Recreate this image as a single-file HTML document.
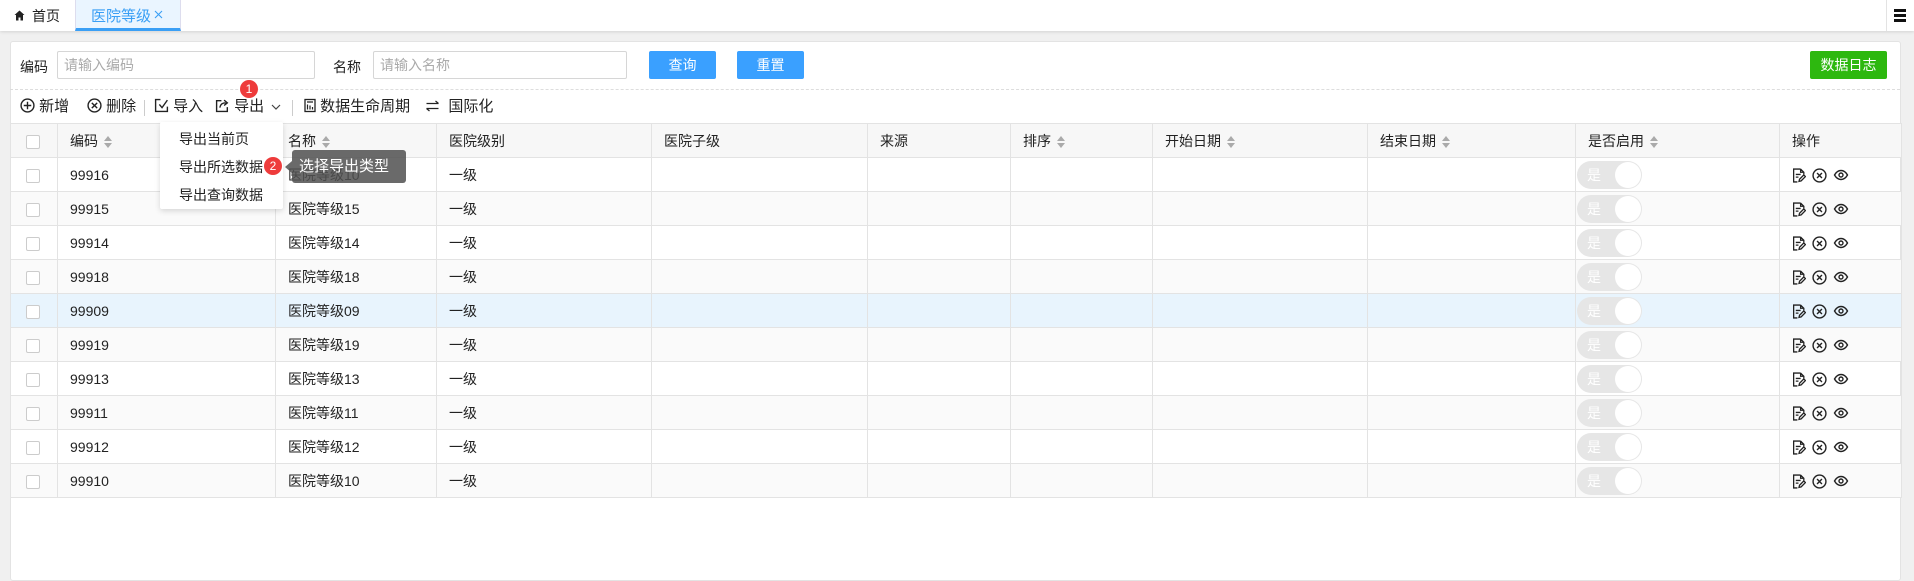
<!DOCTYPE html>
<html><head><meta charset="utf-8">
<style>
*{box-sizing:border-box;margin:0;padding:0}
body{width:1914px;height:567px;overflow:hidden;background:#f0f0f0;font-family:"Liberation Sans","Noto Sans CJK SC",sans-serif;font-size:14px;color:#222;position:relative}
.abs{position:absolute}
.tabbar{left:0;top:0;width:1914px;height:31px;background:#fff;box-shadow:0 1px 3px rgba(0,0,0,.12)}
.card{left:10px;top:41px;width:1891px;height:540px;background:#fff;border:1px solid #e3e3e3;border-radius:3px}
.inp{height:28px;border:1px solid #d6d6d6;border-radius:2px;color:#aaa;padding-left:6px;line-height:26px;font-size:14px}
.btn{height:28px;color:#fff;text-align:center;line-height:28px;border-radius:2px;font-size:14px}
.tb{top:97px;height:20px;line-height:20px;font-size:15px;color:#222}
table{border-collapse:collapse;table-layout:fixed;position:absolute;left:10px;top:123px;width:1891px}
td,th{border:1px solid #e3e3e3;height:34px;font-weight:normal;text-align:left;padding-left:12px;font-size:14px;white-space:nowrap;overflow:hidden}
th{background:#f7f7f7}
tr.g td{background:#fafafa}
tr.h td{background:#e8f4fd}
.cb{display:inline-block;width:14px;height:14px;border:1px solid #ccc;border-radius:2px;background:#fff;vertical-align:middle}
.sort{display:inline-block;width:8px;height:12px;vertical-align:middle;margin-left:6px;position:relative}
.sort:before{content:"";position:absolute;left:0;top:0;border:4px solid transparent;border-bottom:5px solid #aaa;border-top:0}
.sort:after{content:"";position:absolute;left:0;top:7px;border:4px solid transparent;border-top:5px solid #aaa;border-bottom:0}
.sw{display:inline-block;width:65px;height:28px;border-radius:14px;background:#e6e6e6;position:relative;vertical-align:middle;margin-left:-11px}
.sw span{position:absolute;left:10px;top:5px;color:#fff;font-size:14px;line-height:18px}
.sw i{position:absolute;right:1px;top:1px;width:26px;height:26px;border-radius:50%;background:#fff}
.ops svg{vertical-align:middle;margin-right:6px}
</style></head><body>
<div class="abs tabbar">
  <svg class="abs" style="left:14px;top:10px" width="11" height="11" viewBox="0 0 11 11"><path d="M5.5 0.5L0.5 5H2V10.5H4.5V7.5H6.5V10.5H9V5H10.5Z" fill="#222"/></svg>
  <div class="abs" style="left:32px;top:6px;font-size:14px">首页</div>
  <div class="abs" style="left:75px;top:0;width:106px;height:31px;background:#eaf5ff;border-left:1px solid #dde;border-right:1px solid #dde;border-bottom:3px solid #3a9ff5"></div>
  <div class="abs" style="left:91px;top:5px;font-size:15px;color:#3a9ff5">医院等级</div>
  <svg class="abs" style="left:154px;top:10px" width="9" height="9" viewBox="0 0 9 9"><path d="M1 1L8 8M8 1L1 8" stroke="#3a9ff5" stroke-width="1.1"/></svg>
  <div class="abs" style="left:1886px;top:0;width:1px;height:31px;background:#e3e3e3"></div>
  <div class="abs" style="left:1894px;top:9px;width:12px;height:2.5px;background:#111;box-shadow:0 5px 0 #111,0 10px 0 #111"></div>
</div>
<div class="abs card"></div>
<div class="abs" style="left:20px;top:57px">编码</div>
<div class="abs inp" style="left:57px;top:51px;width:258px">请输入编码</div>
<div class="abs" style="left:333px;top:57px">名称</div>
<div class="abs inp" style="left:373px;top:51px;width:254px">请输入名称</div>
<div class="abs btn" style="left:649px;top:51px;width:67px;background:#3aa0ff">查询</div>
<div class="abs btn" style="left:737px;top:51px;width:67px;background:#3aa0ff">重置</div>
<div class="abs btn" style="left:1810px;top:51px;width:77px;background:#2db80f">数据日志</div>
<div class="abs" style="left:10px;top:89px;width:1890px;border-top:1px dashed #ddd"></div>

<div class="abs tb" style="left:20px"><svg width="15" height="15" viewBox="0 0 14 14" style="vertical-align:-2px"><circle cx="7" cy="7" r="6" fill="none" stroke="#222" stroke-width="1.3"/><path d="M7 3.5V10.5M3.5 7H10.5" stroke="#222" stroke-width="1.3"/></svg> 新增</div>
<div class="abs tb" style="left:87px"><svg width="15" height="15" viewBox="0 0 14 14" style="vertical-align:-2px"><circle cx="7" cy="7" r="6" fill="none" stroke="#222" stroke-width="1.3"/><path d="M4.5 4.5L9.5 9.5M9.5 4.5L4.5 9.5" stroke="#222" stroke-width="1.3"/></svg> 删除</div>
<div class="abs" style="left:144px;top:100px;width:1px;height:16px;background:#ccc"></div>
<div class="abs tb" style="left:154px"><svg width="15" height="15" viewBox="0 0 14 14" style="vertical-align:-2px"><path d="M6 1.5H1.5V12.5H12.5V8M5 6L7.5 9L12.5 2" fill="none" stroke="#222" stroke-width="1.3"/></svg> 导入</div>
<div class="abs tb" style="left:215px"><svg width="15" height="15" viewBox="0 0 14 14" style="vertical-align:-2px"><path d="M6 2.5H1.5V12.5H11.5V8.5M4.5 9C5 6 7 4.5 10 4.5M8.5 2L11.5 4.5L8.5 7" fill="none" stroke="#222" stroke-width="1.3"/></svg> 导出 <svg width="10" height="8" viewBox="0 0 10 8" style="margin-left:3px"><path d="M1 2L5 6L9 2" fill="none" stroke="#444" stroke-width="1.2"/></svg></div>
<div class="abs" style="left:292px;top:100px;width:1px;height:16px;background:#ccc"></div>
<div class="abs tb" style="left:304px"><svg width="12" height="15" viewBox="0 0 12 14" style="vertical-align:-2px"><rect x="1" y="1" width="10" height="12" fill="none" stroke="#222" stroke-width="1.3"/><path d="M3 3.5H9M3.5 6V11M6 7V11M8.5 8.5V11" stroke="#222" stroke-width="1.2"/></svg> 数据生命周期</div>
<div class="abs tb" style="left:425px"><svg width="15" height="14" viewBox="0 0 14 14" style="vertical-align:-2px"><path d="M1 4.5H13M10 2L13 4.5M13 9.5H1M4 12L1 9.5" fill="none" stroke="#222" stroke-width="1.2"/></svg>&nbsp; 国际化</div>

<table>
<colgroup><col style="width:47px"><col style="width:218px"><col style="width:161px"><col style="width:215px"><col style="width:216px"><col style="width:143px"><col style="width:142px"><col style="width:215px"><col style="width:208px"><col style="width:204px"><col style="width:122px"></colgroup>
<tr><th style="padding-left:15px"><span class="cb"></span></th><th>编码<span class="sort"></span></th><th>名称<span class="sort"></span></th><th>医院级别</th><th>医院子级</th><th>来源</th><th>排序<span class="sort"></span></th><th>开始日期<span class="sort"></span></th><th>结束日期<span class="sort"></span></th><th>是否启用<span class="sort"></span></th><th>操作</th></tr>
</table>
<table id="t" style="top:157px"></table>
<script>
var ids=[["99916","10"],["99915","15"],["99914","14"],["99918","18"],["99909","09"],["99919","19"],["99913","13"],["99911","11"],["99912","12"],["99910","10"]];
var ops='<svg width="14" height="15" viewBox="0 0 13 14"><path d="M8 1H1.5V13H5M8 1L11 4V6M8 1V4H11M3.5 6H8M3.5 8.5H6M6.5 12.5L7 10.5L11 6.5L12.5 8L8.5 12Z" fill="none" stroke="#222" stroke-width="1.2"/></svg><svg width="15" height="15" viewBox="0 0 14 14"><circle cx="7" cy="7" r="6" fill="none" stroke="#222" stroke-width="1.3"/><path d="M4.7 4.7L9.3 9.3M9.3 4.7L4.7 9.3" stroke="#222" stroke-width="1.3"/></svg><svg width="16" height="12" viewBox="0 0 15 12"><path d="M1 6C3 2.5 5 1.5 7.5 1.5S12 2.5 14 6C12 9.5 10 10.5 7.5 10.5S3 9.5 1 6Z" fill="none" stroke="#222" stroke-width="1.4"/><circle cx="7.5" cy="6" r="2" fill="none" stroke="#222" stroke-width="1.4"/></svg>';
var h='<colgroup><col style="width:47px"><col style="width:218px"><col style="width:161px"><col style="width:215px"><col style="width:216px"><col style="width:143px"><col style="width:142px"><col style="width:215px"><col style="width:208px"><col style="width:204px"><col style="width:122px"></colgroup>';
ids.forEach(function(r,i){var c=i==4?'h':(i%2?'g':'');h+='<tr class="'+c+'"><td style="padding-left:15px"><span class="cb"></span></td><td>'+r[0]+'</td><td>医院等级'+r[1]+'</td><td>一级</td><td></td><td></td><td></td><td></td><td></td><td><span class="sw"><span>是</span><i></i></span></td><td class="ops">'+ops+'</td></tr>';});
document.getElementById('t').innerHTML=h;
</script>

<div class="abs" style="left:160px;top:122px;width:123px;height:87px;background:#fff;box-shadow:0 2px 6px rgba(0,0,0,.15);border-radius:2px"></div>
<div class="abs" style="left:179px;top:129px">导出当前页</div>
<div class="abs" style="left:179px;top:157px">导出所选数据</div>
<div class="abs" style="left:179px;top:185px">导出查询数据</div>
<div class="abs" style="left:292px;top:150px;width:114px;height:33px;background:rgba(80,80,80,.85);border-radius:3px;color:#fff;font-size:15px;line-height:33px;padding-left:7px">选择导出类型</div>
<div class="abs" style="left:285px;top:161px;border:6px solid transparent;border-right:7px solid rgba(80,80,80,.85);border-left:0"></div>
<div class="abs" style="left:240px;top:80px;width:18px;height:18px;border-radius:50%;background:#ee3b3b;color:#fff;font-size:12px;line-height:18px;text-align:center">1</div>
<div class="abs" style="left:264px;top:157px;width:18px;height:18px;border-radius:50%;background:#ee3b3b;color:#fff;font-size:12px;line-height:18px;text-align:center">2</div>
</body></html>
